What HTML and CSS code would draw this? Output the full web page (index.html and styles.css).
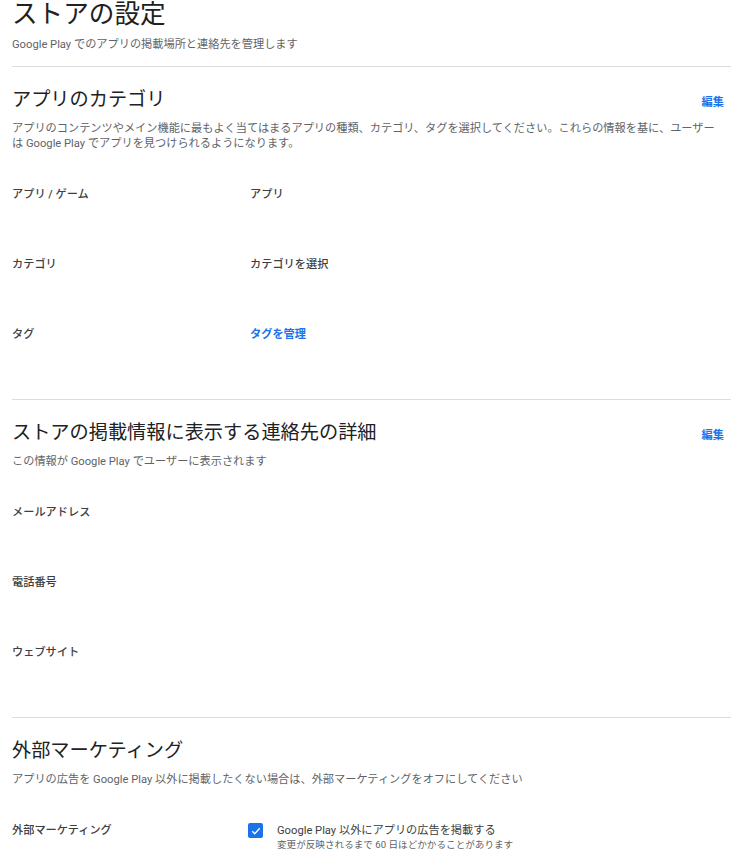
FILE: index.html
```html
<!DOCTYPE html>
<html lang="ja">
<head>
    <meta charset="UTF-8">
    <meta name="viewport" content="width=device-width, initial-scale=1.0">
    <title>ストアの設定</title>
    <link rel="stylesheet" href="styles.css">
</head>
<body>
    <div class="page">
        <!-- ページ見出し -->
        <header class="page-head">
            <h1 class="page-title">ストアの設定</h1>
            <p class="page-sub">Google Play でのアプリの掲載場所と連絡先を管理します</p>
        </header>

        <!-- アプリのカテゴリ -->
        <section class="section">
            <div class="section-head">
                <h2 class="section-title">アプリのカテゴリ</h2>
                <a class="edit" href="#">編集</a>
            </div>
            <p class="section-desc">アプリのコンテンツやメイン機能に最もよく当てはまるアプリの種類、カテゴリ、タグを選択してください。これらの情報を基に、ユーザーは Google Play でアプリを見つけられるようになります。</p>
            <div class="rows">
                <div class="row">
                    <div class="label">アプリ / ゲーム</div>
                    <div class="value">アプリ</div>
                </div>
                <div class="row">
                    <div class="label">カテゴリ</div>
                    <div class="value">カテゴリを選択</div>
                </div>
                <div class="row">
                    <div class="label">タグ</div>
                    <div class="value"><a class="link" href="#">タグを管理</a></div>
                </div>
            </div>
        </section>

        <!-- 連絡先の詳細 -->
        <section class="section">
            <div class="section-head">
                <h2 class="section-title">ストアの掲載情報に表示する連絡先の詳細</h2>
                <a class="edit" href="#">編集</a>
            </div>
            <p class="section-desc">この情報が Google Play でユーザーに表示されます</p>
            <div class="rows">
                <div class="row">
                    <div class="label">メールアドレス</div>
                    <div class="value"></div>
                </div>
                <div class="row">
                    <div class="label">電話番号</div>
                    <div class="value"></div>
                </div>
                <div class="row">
                    <div class="label">ウェブサイト</div>
                    <div class="value"></div>
                </div>
            </div>
        </section>

        <!-- 外部マーケティング -->
        <section class="section">
            <div class="section-head">
                <h2 class="section-title">外部マーケティング</h2>
            </div>
            <p class="section-desc">アプリの広告を Google Play 以外に掲載したくない場合は、外部マーケティングをオフにしてください</p>
            <div class="rows">
                <div class="row">
                    <div class="label">外部マーケティング</div>
                    <div class="value check">
                        <span class="box">
                            <svg width="10" height="10" viewBox="0 0 24 24"><path d="M3 12.5l6 6L21 5.5" fill="none" stroke="#fff" stroke-width="3.2"/></svg>
                        </span>
                        <div class="check-text">
                            <div class="check-main">Google Play 以外にアプリの広告を掲載する</div>
                            <div class="check-note">変更が反映されるまで 60 日ほどかかることがあります</div>
                        </div>
                    </div>
                </div>
            </div>
        </section>
    </div>
</body>
</html>
```

FILE: styles.css
```css
/* リセット */
*{
    margin: 0;
    padding: 0;
    box-sizing: border-box;
}

body{
    background-color: #fff;
    color: #202124;
    font-family: Roboto, "Noto Sans CJK JP", sans-serif;
    font-size: 11.2px;
}

a{
    text-decoration: none;
}

.page{
    padding-left: 12px;
}

/* ページ見出し */
.page-head{
    padding-bottom: 14px;
    border-bottom: 1px solid #dadce0;
}

.page-title{
    font-size: 25.6px;
    font-weight: 400;
    line-height: 28px;
    color: #202124;
}

.page-sub{
    margin-top: 10px;
    line-height: 14px;
    color: #5f6368;
}

/* セクション */
.section{
    padding: 21px 7px 1px 0;
    border-bottom: 1px solid #dadce0;
}

.section:last-child{
    border-bottom: none;
}

.section-head{
    display: flex;
    align-items: center;
    justify-content: space-between;
}

.section-title{
    font-size: 19.2px;
    font-weight: 400;
    line-height: 24px;
    color: #202124;
}

.edit{
    font-size: 11.2px;
    font-weight: 700;
    color: #1a73e8;
    margin-top: 2px;
}

.section-desc{
    margin-top: 9px;
    line-height: 15px;
    color: #5f6368;
}

.rows{
    margin-top: 37px;
}

.row{
    display: grid;
    grid-template-columns: 238px 1fr;
    height: 70px;
    line-height: 14px;
}

.label,
.value{
    font-weight: 500;
    color: #3c4043;
}

.link{
    color: #1a73e8;
    font-weight: 700;
}

/* チェックボックス */
.check{
    display: flex;
    gap: 14px;
    margin-left: -2px;
    font-weight: 400;
}

.box{
    display: flex;
    align-items: center;
    justify-content: center;
    flex: none;
    width: 15px;
    height: 15px;
    margin-top: -1px;
    border-radius: 2px;
    background-color: #1a73e8;
}

.check-main{
    color: #3c4043;
}

.check-note{
    font-size: 9.6px;
    line-height: 14px;
    color: #5f6368;
}
```
